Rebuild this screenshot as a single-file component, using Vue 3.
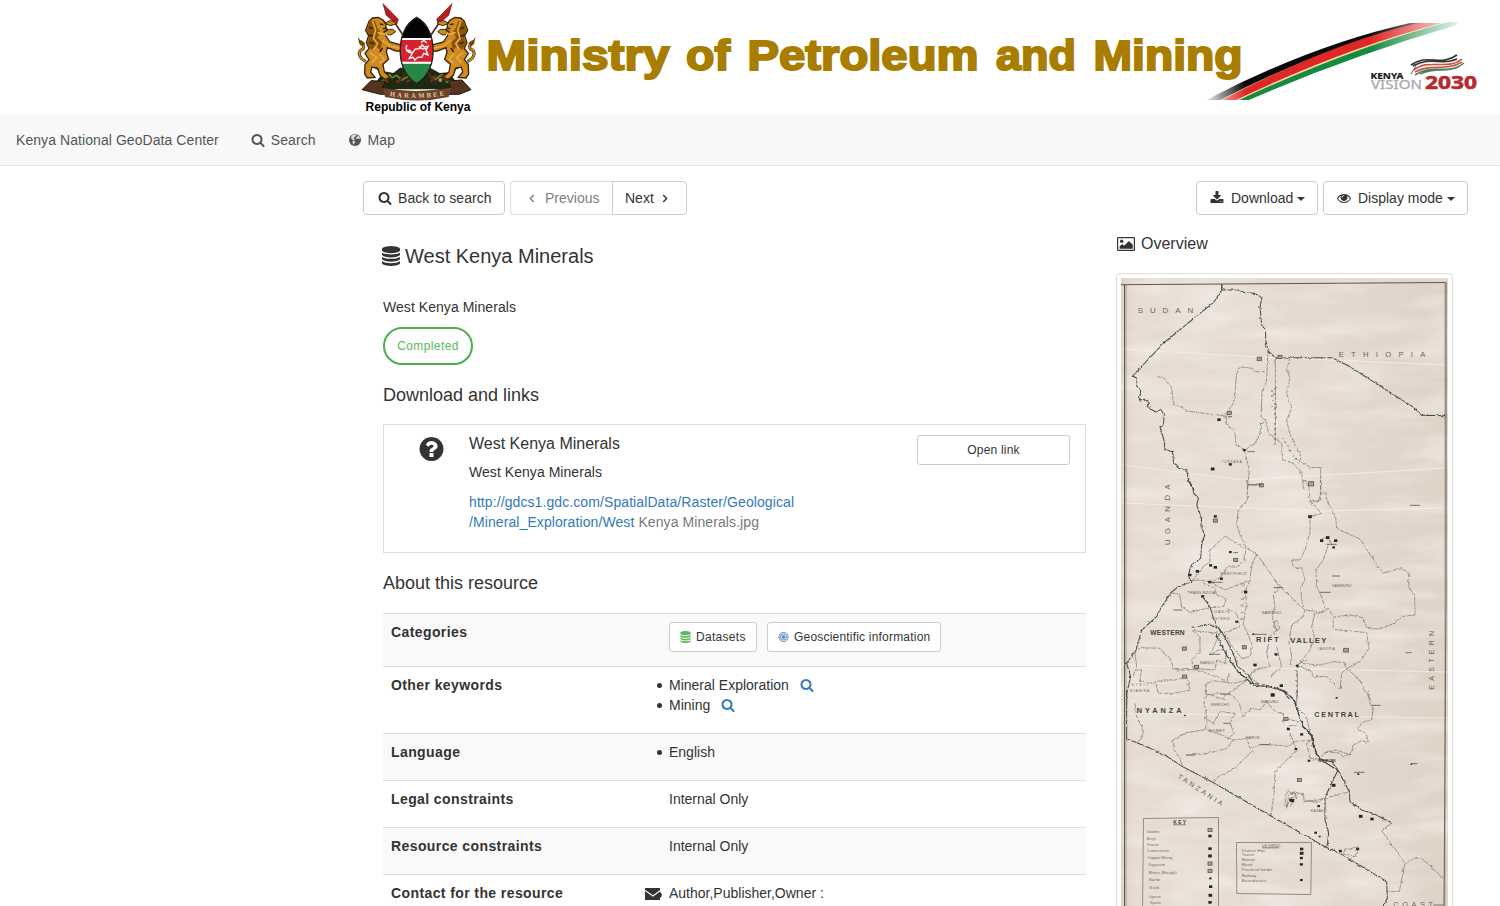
<script setup>
const icons = {
  search: 'M1216 832q0-185-131.5-316.5t-316.5-131.5-316.5 131.5-131.5 316.5 131.5 316.5 316.5 131.5 316.5-131.5 131.5-316.5zm512 832q0 52-38 90t-90 38q-54 0-90-38l-343-342q-179 124-399 124-143 0-273.5-55.5t-225-150-150-225-55.5-273.5 55.5-273.5 150-225 225-150 273.5-55.5 273.5 55.5 225 150 150 225 55.5 273.5q0 220-124 399l343 343q37 37 37 90z',
  database: 'M896 768q237 0 443-43t325-127v170q0 69-103 128t-280 93.5-385 34.5-385-34.5-280-93.5-103-128v-170q119 84 325 127t443 43zm0 768q237 0 443-43t325-127v170q0 69-103 128t-280 93.5-385 34.5-385-34.5-280-93.5-103-128v-170q119 84 325 127t443 43zm0-384q237 0 443-43t325-127v170q0 69-103 128t-280 93.5-385 34.5-385-34.5-280-93.5-103-128v-170q119 84 325 127t443 43zm0-1152q208 0 385 34.5t280 93.5 103 128v128q0 69-103 128t-280 93.5-385 34.5-385-34.5-280-93.5-103-128v-128q0-69 103-128t280-93.5 385-34.5z',
  download: 'M1344 1344q0-26-19-45t-45-19-45 19-19 45 19 45 45 19 45-19 19-45zm256 0q0-26-19-45t-45-19-45 19-19 45 19 45 45 19 45-19 19-45zm128-224v320q0 40-28 68t-68 28h-1472q-40 0-68-28t-28-68v-320q0-40 28-68t68-28h465l135 136q58 56 136 56t136-56l136-136h464q40 0 68 28t28 68zm-325-569q17 41-14 70l-448 448q-18 19-45 19t-45-19l-448-448q-31-29-14-70 17-39 59-39h256v-448q0-26 19-45t45-19h256q26 0 45 19t19 45v448h256q42 0 59 39z',
  eye: 'M1664 960q-152-236-381-353 61 104 61 225 0 185-131.5 316.5t-316.5 131.5-316.5-131.5-131.5-316.5q0-121 61-225-229 117-381 353 133 205 333.5 326.5t434.5 121.5 434.5-121.5 333.5-326.5zm-720-384q0-20-14-34t-34-14q-125 0-214.5 89.5t-89.5 214.5q0 20 14 34t34 14 34-14 14-34q0-86 61-147t147-61q20 0 34-14t14-34zm848 384q0 34-20 69-140 230-376.5 368.5t-499.5 138.5-499.5-139-376.5-368q-20-35-20-69t20-69q140-229 376.5-368t499.5-139 499.5 139 376.5 368q20 35 20 69z',
  question: 'M1024 1376v-192q0-14-9-23t-23-9h-192q-14 0-23 9t-9 23v192q0 14 9 23t23 9h192q14 0 23-9t9-23zm256-672q0-88-55.5-163t-138.5-116-170-41q-243 0-371 213-15 24 8 42l132 100q7 6 19 6 16 0 25-12 53-68 86-92 34-24 86-24 48 0 85.5 26t37.5 59q0 38-20 61t-68 45q-63 28-115.5 86.5t-52.5 125.5v36q0 14 9 23t23 9h192q14 0 23-9t9-23q0-19 21.5-49.5t54.5-49.5q32-18 49-28.5t46-35 44.5-48 28-60.5 12.5-81zm384 192q0 209-103 385.5t-279.5 279.5-385.5 103-385.5-103-279.5-279.5-103-385.5 103-385.5 279.5-279.5 385.5-103 385.5 103 279.5 279.5 103 385.5z'
}

// Map artwork is kept in three stacked tiles, each drawn at three times its final size.
const tiles = [
  {
    y: 270,
    bold: [
      'M335 45V60L385 60 405 68 432 70 456 82 450 110 455 165 466 180 468 215 474 243 496 263 540 263 665 263 715 287 860 380 908 410 935 436 1008 437',
      'M335 60L312 96 162 218 68 318 82 325 80 348 92 362 88 390 106 388 118 400 112 410 135 425 152 418 163 435 160 465 150 470 163 515 165 538 187 545 190 575 205 595 230 600 234 625 252 660'
    ],
    thin: [
      'M143 320L160 323 184 352 192 405 210 408 236 424 345 438 366 440',
      'M464 305H432V296L392 290 380 305 375 370 370 400 348 430 350 460 375 490 378 520 403 541 435 520 450 490 455 458 468 455',
      'M403 541L413 580 418 600 412 660M412 645H455',
      'M474 243L470 330 456 370 453 440 470 455 475 490 496 505 515 520 518 570 550 580 575 610 582 660',
      'M540 263L530 300 540 325 530 370 545 415 530 450 540 495 570 550 572 575 600 592 632 593V660',
      'M496 263V520'
    ],
    dots: [[162, 218, 6], [327, 450, 10], [358, 430, 12], [403, 541, 8], [308, 598, 11], [361, 584, 9], [448, 268, 13], [510, 262, 12], [454, 647, 12], [603, 643, 16]],
    labels: [
      { t: 'SUDAN', x: 83, y: 129, s: 24, w: 167 },
      { t: 'ETHIOPIA', x: 686, y: 261, s: 23, w: 260 },
      { t: 'TURKANA', x: 335, y: 579, s: 9, w: 60 }
    ]
  },
  {
    y: 480,
    bold: [
      'M232 0L247 20 252 42 266 52 260 75 275 115 272 135 284 165 275 195 272 235 250 250 240 265 235 290 245 305 205 320 183 338 155 380 140 410 95 450 78 510 50 550 62 590 50 640 50 670',
      'M278 350L300 380 315 430 337 458 370 520 383 560 412 580 430 610 480 618 518 630 540 660',
      'M337 458L310 435 275 437 245 442'
    ],
    thin: [
      'M582 0L597 22 600 62 625 66 632 40 644 38 652 65 677 110 680 145 750 178 818 280 875 263 895 280 897 320 914 348 915 405 875 410 855 430 805 447 770 442 758 412 720 405 672 411 668 448 770 458 777 505 750 545 710 565',
      'M632 0V60L597 65 M412 0V60L385 90 380 130 390 165 410 205 440 222 510 320 585 390 640 397 655 385 670 410',
      'M600 65L635 100 600 110 600 160 585 210 570 240 545 240 550 260 575 265 585 300 572 325 578 380',
      'M655 195L640 240 618 270 620 320 630 340 645 380 635 398 615 400 605 440 613 470 600 510 562 558',
      'M585 390L580 410 545 435 537 490 545 530 540 555 562 558 600 570 610 590 650 590 690 630 695 580 710 565 705 548 670 545 630 555 570 550 590 540',
      'M562 558V660', 'M710 565L745 595 782 660',
      'M245 305L280 260 300 245 300 210 345 168 380 190 408 208 402 240 380 262 352 260 330 295 300 305 265 300 235 302',
      'M300 305L345 330 420 300 425 255 440 222M183 338L208 342 215 380 240 397 300 383 340 380 350 355 320 345 315 325 280 310',
      'M420 300L405 335 410 370 400 430 415 465 427 500 420 530 395 535 360 490 345 458 390 440 380 400 350 385',
      'M510 320L490 345 495 380 485 410 500 450 480 470 470 520 480 560 430 570 410 600M500 420L510 445 500 453 490 435 500 420',
      'M245 450L270 470 270 515 245 540 250 565 315 570 320 540 345 550 350 510 325 510 300 525 330 460 250 452',
      'M80 560L75 520 90 503 150 505 185 545 190 570 240 570M70 590L75 570 95 570 90 600 120 610 160 600 195 600 230 590 240 630 190 640 145 640 138 610M195 565L260 570 320 590 350 605 358 580M290 610L310 602 370 610 412 600M290 610L285 640 315 650 350 660 M340 650L412 600M450 560L420 590 455 620M500 500L515 560 480 590M630 180L650 170 665 195 660 180'
    ],
    dots: [[316, 110, 9], [316, 123, 12], [600, 111, 11], [635, 183, 10], [653, 174, 11], [677, 183, 10], [671, 203, 8], [361, 217, 8], [377, 241, 12], [302, 257, 9], [316, 263, 10], [262, 275, 10], [240, 286, 9], [334, 297, 9], [299, 307, 9], [407, 337, 10], [278, 350, 9], [380, 426, 8], [403, 503, 12], [223, 507, 12], [498, 524, 9], [435, 556, 10], [260, 562, 12], [224, 591, 12], [562, 558, 8], [514, 618, 10], [488, 646, 11], [708, 512, 14], [430, 463, 6]],
    labels: [
      { t: 'UGANDA', x: 0, y: 0, s: 23, w: 182, r: 'translate(180 195) rotate(-90)' },
      { t: 'EASTERN', x: 0, y: 0, s: 21, w: 176, r: 'translate(972 629) rotate(-90)' },
      { t: 'WESTERN', x: 121, y: 465, s: 20, w: 103, b: true },
      { t: 'RIFT', x: 438, y: 486, s: 23, w: 68, b: true },
      { t: 'VALLEY', x: 541, y: 488, s: 23, w: 108, b: true },
      { t: 'WEST POKOT', x: 331, y: 286, s: 12, w: 80 },
      { t: 'TRANS NZOIA', x: 232, y: 341, s: 12, w: 84 },
      { t: 'SAMBURU', x: 666, y: 320, s: 11, w: 58 },
      { t: 'UASIN', x: 313, y: 399, s: 11, w: 45 },
      { t: 'GISHU', x: 313, y: 419, s: 11, w: 45 },
      { t: 'BARINGO', x: 456, y: 402, s: 12, w: 57 },
      { t: 'LAIKIPIA', x: 623, y: 511, s: 11, w: 52 },
      { t: 'NANDI', x: 270, y: 552, s: 12, w: 42 },
      { t: 'ELGEYO', x: 0, y: 0, s: 12, w: 110, r: 'translate(398 420) rotate(-87)' },
      { t: 'KISII', x: 65, y: 618, s: 10, w: 48 },
      { t: 'NYAMIRA', x: 60, y: 637, s: 10, w: 58 }
    ]
  },
  {
    y: 690,
    bold: [
      'M50 0V147L80 158 160 192 218 230 310 278 483 378 645 470 690 490 830 575 832 625 820 648',
      'M520 0L552 28 565 70 580 110 603 130 610 170 630 208 665 215 684 240 718 305 720 335 755 360 790 370 845 400',
      'M684 240L660 290 645 322 645 390 656 430 652 465 642 472'
    ],
    thin: [
      'M75 40L80 80 100 120 95 145 80 158M218 230L210 205 193 180 188 150 230 128 290 118 290 80 282 40 290 0',
      'M230 196L290 190 350 175 370 150 335 135 290 120M370 150L410 145 420 175 455 163 540 168 550 155 540 130',
      'M310 278L325 260 375 235 430 180M290 15L330 10 365 15 388 40 398 80 425 55 450 60 470 35 490 60 520 72 520 100M280 80L310 100 330 65 375 70 360 100 372 130 350 150',
      'M483 378L492 310 495 245 560 180 550 155 605 150M605 150L590 160 600 205 640 213M718 305L645 325 620 330 580 335',
      'M560 0V50L590 80 600 130M640 190L680 180 720 195 730 165 755 152 775 158 770 135 742 115 755 98 785 90 790 55 780 40 775 0M635 200L650 185 690 190 700 202 725 190',
      'M845 400L815 422 885 520 915 505 935 505 1000 565M885 520L868 604 830 604',
      'M540 310L580 310 582 330 625 338 640 325M530 355L525 325 550 305 560 320 540 350M705 480L745 470 735 500 700 490 705 480',
      'M525 318L535 302 545 312 555 305 558 320 535 325 530 350 538 335M527 85L545 90 565 95 560 108 540 106 530 115'
    ],
    dots: [[488, 16, 11], [225, 77, 5], [528, 88, 12], [535, 118, 9], [575, 134, 9], [558, 178, 8], [597, 213, 8], [568, 271, 12], [671, 287, 11], [547, 333, 11], [543, 331, 10], [752, 380, 11], [786, 388, 10], [617, 429, 8], [629, 440, 6], [691, 484, 9], [743, 478, 9], [626, 349, 8], [904, 223, 5], [745, 253, 6], [680, 24, 6], [300, 421, 12], [300, 439, 10], [300, 477, 10], [300, 499, 11], [300, 522, 12], [300, 544, 12], [301, 566, 7], [302, 591, 10], [301, 617, 11], [300, 638, 10], [575, 478, 10], [575, 491, 11], [574, 505, 9], [574, 524, 9], [574, 571, 8]],
    labels: [
      { t: 'NYANZA', x: 80, y: 69, s: 22, w: 135, b: true },
      { t: 'CENTRAL', x: 613, y: 82, s: 22, w: 134, b: true },
      { t: 'KERICHO', x: 303, y: 49, s: 12, w: 56 },
      { t: 'NAKURU', x: 453, y: 40, s: 12, w: 52 },
      { t: 'BOMET', x: 297, y: 126, s: 12, w: 48 },
      { t: 'NAROK', x: 407, y: 148, s: 12, w: 43 },
      { t: 'NAIROBI', x: 625, y: 215, s: 12, w: 52, b: true },
      { t: 'KAJIADO', x: 602, y: 367, s: 11, w: 48 },
      { t: 'TANZANIA', x: 0, y: 0, s: 21, w: 157, r: 'translate(201 263) rotate(33)' },
      { t: 'COAST', x: 850, y: 650, s: 22, w: 119 },
      { t: 'KEY', x: 190, y: 403, s: 15, w: 38, b: true },
      { t: 'LEGEND', x: 456, y: 472, s: 12, w: 55 },
      { t: 'Diatomite', x: 110, y: 430, s: 9, w: 38 }, { t: 'Beryl', x: 110, y: 449, s: 11, w: 27 },
      { t: 'Fluorite', x: 112, y: 468, s: 9, w: 34 }, { t: 'Limestone', x: 112, y: 486, s: 12, w: 65 },
      { t: 'Copper Mining', x: 114, y: 506, s: 11, w: 73 }, { t: 'Gypsum', x: 115, y: 528, s: 12, w: 50 },
      { t: 'Mines (Rough)', x: 116, y: 552, s: 12, w: 84 }, { t: 'Barite', x: 117, y: 573, s: 12, w: 34 },
      { t: 'Gold', x: 117, y: 598, s: 12, w: 29 }, { t: 'Gypsum', x: 117, y: 623, s: 9, w: 35 },
      { t: 'Kyanite', x: 120, y: 642, s: 9, w: 32 }, { t: 'District Hqs', x: 395, y: 486, s: 12, w: 70 },
      { t: 'Towns', x: 395, y: 498, s: 11, w: 37 }, { t: 'Minerals', x: 395, y: 512, s: 10, w: 40 },
      { t: 'Road', x: 395, y: 528, s: 12, w: 31 }, { t: 'Provincial border', x: 395, y: 544, s: 11, w: 92 },
      { t: 'Railway', x: 395, y: 560, s: 12, w: 44 }, { t: 'Boundaries', x: 395, y: 577, s: 12, w: 73 }
    ]
  }
]
const dashes = [[0, 358, 366, 440], [0, 412, 435, 545], [1, 415, 455, 14], [1, 900, 930, 76], [1, 650, 680, 193], [1, 300, 338, 307], [1, 630, 662, 337], [1, 190, 217, 390], [1, 430, 470, 463], [1, 297, 330, 523], [1, 887, 905, 518], [1, 370, 384, 218], [1, 666, 690, 288], [1, 490, 520, 323], [2, 330, 362, 12], [2, 340, 362, 100], [2, 450, 478, 164], [2, 228, 255, 195], [2, 785, 812, 46], [2, 904, 922, 221], [2, 732, 764, 247], [2, 970, 1000, 645]]

const ministry = [
  { t: 'Ministry', x: 486.500, w: 183 },
  { t: 'of', x: 686, w: 44 },
  { t: 'Petroleum', x: 747.500, w: 231 },
  { t: 'and', x: 996, w: 80 },
  { t: 'Mining', x: 1093.500, w: 149 }
]

const rows = [
  { label: 'Categories', kind: 'tags' },
  { label: 'Other keywords', kind: 'keywords', items: ['Mineral Exploration', 'Mining'] },
  { label: 'Language', kind: 'list', items: ['English'] },
  { label: 'Legal constraints', kind: 'text', text: 'Internal Only' },
  { label: 'Resource constraints', kind: 'text', text: 'Internal Only' },
  { label: 'Contact for the resource', kind: 'contact', text: 'Author,Publisher,Owner :' }
]
</script>

<template>
  <div class="page">
    <header class="banner">
      <svg width="1500" height="115" viewBox="0 0 1500 115">
        <defs>
          <linearGradient id="swoosh" gradientUnits="userSpaceOnUse" x1="1204" x2="1460">
            <stop offset="0" stop-color="#fff" /><stop offset=".16" stop-color="#fff" stop-opacity="0" />
            <stop offset=".65" stop-color="#fff" stop-opacity="0" /><stop offset="1" stop-color="#fff" stop-opacity=".9" />
          </linearGradient>
          <g id="lion">
            <path d="M48 185C24 174 22 151 38 148c8-8-2-22-7-24" fill="none" stroke="#3b2405" stroke-width="9" />
            <path d="M48 185C24 174 22 151 38 148c8-8-2-22-7-24" fill="none" stroke="#cc8a1c" stroke-width="5" />
            <path d="M23 110l9 12 13 6-8 12-9-8z" fill="#754707" />
            <path d="M57 64L68 54 85 52 99 60 109 72 107 81 112 88 102 96 108 108 120 126 150 134 163 143 158 154 138 153 112 143 109 157 116 178 99 193 103 216 121 232 104 238 90 226 83 205 66 201 62 216 75 232 52 234 44 222 45 194 57 179 45 160 57 145 49 128 56 107 47 91z" fill="#cf8b1f" stroke="#3a2407" stroke-width="4" />
            <path d="M57 66L51 91 58 113 51 130 64 150 78 139 92 151 96 126 82 113 91 96 82 83 75 63z" fill="#8b530a" />
            <path d="M68 65l9 25-7 25 13 16-12 18M60 158l20 14-15 17M89 162l14 16-14 12M96 121l26 18 34 7M83 98l24 5" fill="none" stroke="#e3ac48" stroke-width="5" />
            <path d="M90 72l10 2M99 86l8-1M58 82l11 4M55 105l14 4M59 127l13 4M98 144l-9 12M76 203l10 6" stroke="#2c1c08" stroke-width="4" />
            <path d="M104 96l14-8 10 0 9 7-14 10-11-1M104 70l15-8 14 2 5 7-16 6z" fill="#cc8a1c" stroke="#3b2405" stroke-width="3" />
          </g>
          <clipPath id="shield"><path d="M200 52C166 70 148 112 151 163c2 43 25 73 49 88 24-15 47-45 49-88 3-51-15-93-49-111z" /></clipPath>
        </defs>
        <g transform="translate(350 0) scale(.3333)">
          <path d="M76 249l26-35 28 5 20-16h90l29 16 28-2 26 35v16H76z" fill="#1d2913" />
          <path d="M116 224l10 9 14-7 16 14 21-12M239 228l18 10 17-14 20 13M90 246l20-9M287 247l20-5" fill="none" stroke="#68772e" stroke-width="6" />
          <path d="M102 241l12 5M138 247l20-14M242 245l15-19M274 227l14 15M170 246l12-8" stroke="#972c1b" stroke-width="5" />
          <circle cx="118" cy="229" r="6" fill="#9b9a79" /><circle cx="271" cy="240" r="6" fill="#a59071" />
          <path d="M128 59L258 251M274 59L144 251" stroke="#5d261c" stroke-width="5" />
          <path d="M99 11l10 35 31 27 5-15zM306 11l-46 47 5 15 31-27z" fill="#b91d20" stroke="#721114" stroke-width="2" />
          <use href="#lion" /><use href="#lion" transform="translate(400 0) scale(-1 1)" />
          <g clip-path="url(#shield)">
            <path d="M145 45h110v73H145z" fill="#050505" /><path d="M145 118h110v69H145z" fill="#d9212e" /><path d="M145 190h110v70H145z" fill="#288647" />
            <path d="M145 117h110M145 188h110" stroke="#fff" stroke-width="6" />
          </g>
          <path d="M200 52C166 70 148 112 151 163c2 43 25 73 49 88 24-15 47-45 49-88 3-51-15-93-49-111z" fill="none" stroke="#24231e" stroke-width="4" />
          <path d="M171 135c-8 12 5 27 17 22l8-10 14-1 6-12 6 7 12-2-6 12 6 14-13-5-5 11-13 1-8 8-6-8-11 3 9-14-9-11-9 4M206 139l12 8 10-2M213 127l9-6 8 8" fill="none" stroke="#fff" stroke-width="4" />
          <path d="M63 242l42 2-8 20 45 7q54 14 112 0l49-7-7-21 40-3 27 29-35 14H91L36 269z" fill="#55331f" stroke="#24170e" stroke-width="3" />
          <path id="motto" d="M119 288Q200 300 286 286" fill="none" />
          <path d="M99 264q101 18 205-1l-8 28q-95 21-191 0z" fill="#6b4429" />
          <text font-size="20" font-family="Liberation Serif,serif" font-weight="bold" fill="#e3cfad"><textPath href="#motto" textLength="165">HARAMBEE</textPath></text>
        </g>
        <text x="365.500" y="111" font-size="12" font-weight="bold" textLength="105" fill="#000">Republic of Kenya</text>
        <path d="M1206 100Q1312 45 1410 23H1431Q1332 47 1225 100z" fill="#080808" />
        <path d="M1220 100Q1330 44 1424 23H1438Q1338 48 1231 100z" fill="#efc4a2" />
        <path d="M1222 100Q1331 43 1418 23H1442Q1345 50 1237 100z" fill="#de2825" />
        <path d="M1236 100Q1345 48 1439 24L1449 23Q1350 51 1242 100z" fill="#f3d6ac" />
        <path d="M1239 100Q1351 48 1448 22H1457V25Q1350 56 1249 100z" fill="#168b3e" />
        <path d="M1200 15h260v90h-260z" fill="url(#swoosh)" />
        <text v-for="word in ministry" :key="word.t" class="ministry" :x="word.x" y="70" :textLength="word.w" lengthAdjust="spacingAndGlyphs">{{ word.t }}</text>
        <g font-family="Noto Sans,sans-serif" font-weight="bold">
          <text x="1370.500" y="78.700" font-size="8.800" textLength="33" lengthAdjust="spacingAndGlyphs" fill="#171515" stroke="#171515" stroke-width=".2">KENYA</text>
          <text x="1371" y="89" font-size="12" font-weight="normal" textLength="51" lengthAdjust="spacingAndGlyphs" fill="#a7adb2" stroke="#a7adb2" stroke-width=".3">VISION</text>
          <text x="1425" y="89" font-size="18.500" textLength="52" lengthAdjust="spacingAndGlyphs" fill="#b7292d" stroke="#b7292d" stroke-width=".6">2030</text>
        </g>
        <g fill="none" stroke-width="1.600">
          <path d="M1411 65c17-12 29 2 46-10M1413 66c18-10 29 0 44-7" stroke="#353033" /><path d="M1414 70c14-12 33 1 48-11M1415 72c15-9 31 0 47-10" stroke="#c65546" /><path d="M1415 75c16-12 33 1 49-12M1420 74c17-8 26 0 40-8" stroke="#4f8060" />
          <path d="M1416 66l-5 8" stroke="#333" stroke-width=".8" />
        </g>
      </svg>
    </header>

    <nav class="navbar">
      <a class="brand">Kenya National GeoData Center</a>
      <a class="nav-search"><svg class="icon" viewBox="0 0 1792 1792"><path :d="icons.search" /></svg>Search</a>
      <a class="nav-map">
        <svg class="icon" viewBox="0 0 14 14"><circle cx="7" cy="7" r="6" /><path d="M6.800 1.500l1.900.3-.5 1.200-1.300.4-.5 1-1 .9 1.300.8-.2 1.100-1.500-.3-1.300-1-.7-.9.500-1.800 1.200-1.100zM9.500 2.500l1.700 1.100.9 1.900-1.200.4-.7-.6-1 .8-1.300-.8.5-1.200 1.100-.4zM4.800 7.600l1.900.6.7 1-1.500 1.600-.6.9-.8-2.300z" fill="#f8f8f8" opacity=".85" /></svg>Map</a>
    </nav>

    <div class="content">
      <div class="toolbar">
        <button class="btn back"><svg class="icon" viewBox="0 0 1792 1792"><path :d="icons.search" /></svg>Back to search</button>
        <div class="pager">
          <button class="btn previous"><svg class="chevron" viewBox="0 0 6 9"><path d="M4.800 1L1.300 4.500 4.800 8" /></svg>Previous</button>
          <button class="btn next">Next<svg class="chevron" viewBox="0 0 6 9"><path d="M1.200 1l3.500 3.500L1.200 8" /></svg></button>
        </div>
        <span class="spacer"></span>
        <button class="btn download"><svg class="icon" viewBox="0 0 1792 1792"><path :d="icons.download" /></svg>Download<i class="caret"></i></button>
        <button class="btn display"><svg class="icon" viewBox="0 0 1792 1792"><path :d="icons.eye" /></svg>Display mode<i class="caret"></i></button>
      </div>

      <div class="columns">
        <main>
          <h1><svg class="db" viewBox="128 0 1536 1792" preserveAspectRatio="none"><path :d="icons.database" /></svg>West Kenya Minerals</h1>
          <p class="abstract">West Kenya Minerals</p>
          <span class="status">Completed</span>
          <h2>Download and links</h2>
          <section class="link-card">
            <svg class="question" viewBox="128 128 1536 1536"><path :d="icons.question" /></svg>
            <div class="link-body">
              <h3>West Kenya Minerals</h3>
              <p>West Kenya Minerals</p>
              <div class="url"><a>http://gdcs1.gdc.com/SpatialData/Raster/Geological<br>/Mineral_Exploration/West</a> Kenya Minerals.jpg</div>
            </div>
            <button class="small-btn open">Open link</button>
          </section>
          <h2 class="about">About this resource</h2>
          <dl>
            <div v-for="row in rows" :key="row.label" class="row" :class="row.kind">
              <dt>{{ row.label }}</dt>
              <dd>
                <template v-if="row.kind === 'tags'">
                  <button class="small-btn dataset"><svg viewBox="128 0 1536 1792"><path :d="icons.database" /></svg>Datasets</button>
                  <button class="small-btn geo"><svg viewBox="0 0 12 12" fill="none" stroke="#4d82ba"><circle cx="6" cy="6" r="5" /><circle cx="6" cy="6" r="3.300" /><circle cx="6" cy="6" r="1.500" fill="#4d82ba" /></svg>Geoscientific information</button>
                </template>
                <ul v-else-if="row.items">
                  <li v-for="item in row.items" :key="item">{{ item }}<svg v-if="row.kind === 'keywords'" class="icon" viewBox="0 0 1792 1792"><path :d="icons.search" /></svg></li>
                </ul>
                <template v-else>
                  <svg v-if="row.kind === 'contact'" class="mail" viewBox="0 0 17 12"><path d="M0 0h15v2L8 7.200 0 1.700zM0 3l8 5.700L15 3.600l2 3-1 3h-1V12H0z" /></svg>{{ row.text }}
                </template>
              </dd>
            </div>
          </dl>
        </main>

        <aside>
          <h4><svg viewBox="0 0 18 14"><path d="M1.200.6h15.600q.6 0 .6.6v11.600q0 .6-.6.6H1.200q-.6 0-.6-.6V1.200q0-.6.6-.6z" fill="none" stroke="currentColor" stroke-width="1.200" /><circle cx="4.700" cy="4.300" r="1.700" /><path d="M2.600 11.800V9.300L5.500 7l1.600 1.700L12 4l3.800 3.800v4z" /></svg>Overview</h4>
          <div class="thumbnail">
            <svg width="327" height="640" viewBox="1121 278 327 640">
              <defs>
                <linearGradient id="paper" x1="0" y1="0" x2="1" y2="0"><stop offset="0" stop-color="#dfd2c6" /><stop offset=".04" stop-color="#e6dcd2" /><stop offset=".5" stop-color="#e5dbd1" /><stop offset="1" stop-color="#dfd3c8" /></linearGradient>
                <filter id="creases"><feTurbulence type="fractalNoise" baseFrequency=".012 .05" numOctaves="3" seed="4" /><feColorMatrix values="0 0 0 0 1  0 0 0 0 .98  0 0 0 0 .95  1.5 0 0 0 -.6" /></filter>
                <filter id="pen"><feTurbulence type="fractalNoise" baseFrequency=".25" numOctaves="2" result="n" /><feDisplacementMap in="SourceGraphic" in2="n" scale="3" xChannelSelector="R" yChannelSelector="G" /></filter>
              </defs>
              <path d="M1121 278h327v640h-327z" fill="url(#paper)" />
              <path d="M1121 278h327v640h-327z" filter="url(#creases)" opacity=".6" />
              <path d="M1121 349l139 8 187 8M1121 465l122 15 204-12M1121 503l200 8 126-3M1121 665l327 7M1121 713l327 5" stroke="#f6f1ea" stroke-width="1.200" opacity=".7" fill="none" />
              <path d="M1121 284.700L1446 282.500V600L1444 910M1124.500 284v626" fill="none" stroke="#5d5652" />
              <path d="M1126 284v626M1445 282v630" stroke="#8d827a" stroke-width=".7" />
              <g filter="url(#pen)">
                <g v-for="tile in tiles" :key="tile.y" :transform="`translate(1110 ${tile.y}) scale(.33333)`">
                  <path v-for="d in tile.thin" :key="d" :d="d" class="thin-line" />
                  <path v-for="d in tile.bold" :key="d" :d="d" class="bold-line" />
                </g>
                <path d="M1216 634L1227 656 1239 673 1247 679 1253 685 1270 687 1286 692 1294 700 1303 727 1312 735 1314 748 1320 759 1337 770" fill="none" stroke="#45413d" stroke-width="1.200" />
                <path d="M1275 388v60M1282 437l17 27M1297 665v33M1272 390v20" class="dotted" />
              </g>
              <g v-for="tile in tiles" :key="'l' + tile.y" :transform="`translate(1110 ${tile.y}) scale(.33333)`">
                <rect v-for="(dot, i) in tile.dots" :key="i" :x="dot[0] - dot[2] / 2" :y="dot[1] - dot[2] / 2" :width="dot[2]" :height="dot[2] * .8" :class="dot[2] > 11 ? 'symbol' : 'dot'" />
                <text v-for="(label, i) in tile.labels" :key="i" :x="label.x" :y="label.y" :transform="label.r" :font-size="label.s" :textLength="label.w" :class="{ strong: label.b }" class="map-label">{{ label.t }}</text>
              </g>
              <path v-for="(d, i) in dashes" :key="'d' + i" :d="`M${1110 + d[1] / 3} ${tiles[d[0]].y + d[3] / 3}H${1110 + d[2] / 3}`" stroke="#5b5652" stroke-width=".8" />
              <path d="M1143.500 818.500l75-1v100h-76zM1236.500 842.500h75l-.7 52-74-1z" fill="none" stroke="#8b837b" stroke-width=".9" />
              <path d="M1173 824.800h13M1262 847.800h17" stroke="#555" stroke-width=".7" />
            </svg>
          </div>
        </aside>
      </div>
    </div>
  </div>
</template>

<style>
html, body { margin: 0; overflow: hidden; }
</style>
<style scoped>
* { box-sizing: border-box; }
.page { width: 1500px; height: 906px; overflow: hidden; background: #fff; color: #333; font: 14px/20px "Liberation Sans", Arial, sans-serif; }
h1, h2, h3, h4, p, ul, dl, dd { margin: 0; font-weight: normal; }
svg { fill: currentColor; }
.banner { height: 115px; }
.banner svg { display: block; font-family: "Liberation Sans", Arial, sans-serif; }
.ministry { font-size: 42px; font-weight: bold; fill: #a87d00; stroke: #a87d00; stroke-width: 2px; }
.navbar { height: 51px; display: flex; align-items: center; background: #f8f8f8; border-bottom: 1px solid #e7e7e7; padding-left: 16px; color: #555; }
.navbar a { display: flex; align-items: center; letter-spacing: .07px; }
.icon { width: 14px; height: 14px; flex: none; }
.nav-search { margin-left: 32px; }
.nav-search .icon { margin-right: 6px; }
.nav-map { margin-left: 32px; }
.nav-map .icon { margin-right: 6px; }
.content { padding: 15px 32px 0 363px; }
.toolbar { display: flex; height: 34px; }
.btn { height: 34px; border: 1px solid #ccc; border-radius: 4px; background: #fff; color: #333; font: inherit; padding: 0 12px; display: flex; align-items: center; white-space: nowrap; }
.back { width: 142px; margin-right: 5px; padding-left: 14px; letter-spacing: .08px; }
.back .icon, .download .icon, .display .icon { margin-right: 6px; }
.pager { display: flex; }
.previous { width: 103px; padding-left: 18px; border-radius: 4px 0 0 4px; border-color: #ddd; color: #808080; border-right: 0; }
.next { width: 75px; border-radius: 0 4px 4px 0; margin-left: -1px; }
.chevron { width: 6px; height: 9px; fill: none; stroke: currentColor; stroke-width: 1.4; }
.previous .chevron { margin-right: 10px; }
.next .chevron { margin-left: 8px; }
.spacer { flex: 1; }
.download { width: 122px; margin-right: 5px; padding-left: 13px; }
.display { width: 145px; padding-left: 13px; }
.download .icon, .display .icon { margin-right: 7px; }
.caret { width: 0; height: 0; border: 4px solid transparent; border-top-color: #333; border-bottom: 0; margin: 1px 0 0 4px; }
.columns { display: flex; padding-left: 20px; }
main { width: 703px; margin-right: 30px; }
h1 { font-size: 20px; line-height: 24px; margin-top: 29px; display: flex; align-items: center; }
.db { width: 18px; height: 20px; margin: 0 5px 0 -1px; }
.abstract { margin-top: 29px; letter-spacing: .05px; }
.status { display: flex; align-items: center; justify-content: center; width: 90px; height: 38px; margin-top: 10px; padding-bottom: 1px; border: 2px solid #4cae4c; border-radius: 19px; color: #5cb85c; font-size: 12px; letter-spacing: .4px; }
h2 { font-size: 18px; line-height: 20px; margin-top: 20px; }
.link-card { height: 129px; border: 1px solid #ddd; margin-top: 19px; padding: 10px 15px 0 35px; display: flex; align-items: flex-start; }
.question { width: 25px; height: 24px; margin: 2px 25px 0 0; }
.link-body { width: 448px; }
h3 { font-size: 16px; line-height: 18px; }
.link-body p { margin: 9px 0 10px; letter-spacing: .05px; }
.url { color: #777; letter-spacing: .09px; white-space: nowrap; }
.url a { color: #337ab7; }
.small-btn { height: 30px; border: 1px solid #ccc; border-radius: 3px; background: #fff; color: #333; font: 12px/18px "Liberation Sans", Arial, sans-serif; padding: 0 10px; white-space: nowrap; letter-spacing: .2px; }
.open { width: 153px; letter-spacing: .2px; }
.about { margin-bottom: 20px; }
.row { height: 47px; padding: 8px; display: flex; border-top: 1px solid #ddd; }
.row:nth-child(odd) { background: #f9f9f9; }
.row.tags { height: 53px; }
.row.keywords { height: 67px; }
dt { width: 278px; font-weight: bold; letter-spacing: .4px; }
dd { position: relative; }
ul { list-style: none; padding: 0; }
li { position: relative; display: flex; align-items: center; height: 20px; }
li::before { content: ""; position: absolute; left: -12px; top: 8px; width: 5px; height: 5px; border-radius: 50%; background: #333; }
li .icon { margin-left: 11px; color: #337ab7; }
.tags dd { display: flex; gap: 10px; }
.dataset, .geo { display: flex; align-items: center; }
.dataset { width: 88px; letter-spacing: .3px; }
.geo { width: 174px; }
.small-btn svg { width: 11px; height: 12px; margin-right: 5px; flex: none; }
.dataset svg { color: #5cb85c; }
.geo svg { fill: none; }
.mail { position: absolute; left: -24px; top: 5px; width: 17px; height: 12px; }
aside { width: 337px; }
h4 { font-size: 16px; line-height: 20px; margin: 19px 0 19px 1px; display: flex; align-items: center; }
h4 svg { width: 18px; height: 14px; margin-right: 6px; }
.thumbnail { padding: 4px; border: 1px solid #ddd; border-radius: 4px; width: 337px; }
.thumbnail svg { display: block; }
.thin-line { fill: none; stroke: #79736d; stroke-width: 2.1; stroke-dasharray: 14 2; }
.bold-line { fill: none; stroke: #4d4945; stroke-width: 3.1; stroke-dasharray: 28 2; }
.dotted { fill: none; stroke: #706b65; stroke-width: 1; stroke-dasharray: 2 3; }
.dot { fill: #292725; }
.symbol { fill: #aaa198; stroke: #5f5953; stroke-width: 2.5; }
.map-label { fill: #6b655f; font-family: "Liberation Sans", sans-serif; }
.strong { fill: #45413d; font-weight: bold; }
</style>
